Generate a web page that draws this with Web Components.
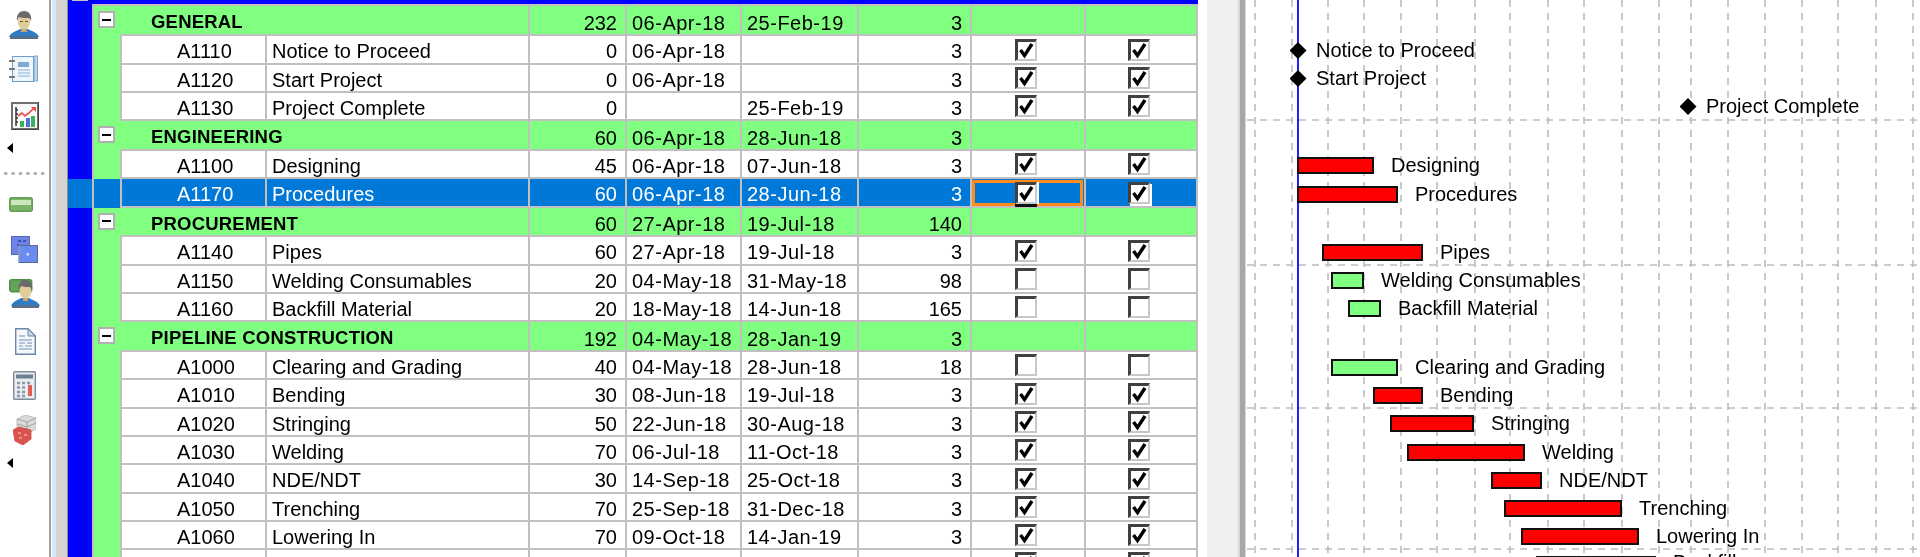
<!DOCTYPE html>
<html>
<head>
<meta charset="utf-8">
<title>Schedule</title>
<style>
    html, body { margin: 0; height: 557px; overflow: hidden; background: #fff; }
    body { font: 20px "Liberation Sans", Arial, sans-serif; color: #000; }
    pm-app { filter: blur(0.5px); }
</style>
</head>
<body>
<pm-app>
    <pm-toolbar slot="tools">
        <pm-tool icon="person" style="margin:10px 0 0 9px"></pm-tool>
        <pm-tool icon="notebook" style="margin:15px 0 0 9px"></pm-tool>
        <pm-tool icon="chart" style="margin:19px 0 0 11px"></pm-tool>
        <pm-tool icon="arrow" style="margin:13px 0 0 7px"></pm-tool>
        <pm-tool icon="sep" style="margin:19px 0 0 4px"></pm-tool>
        <pm-tool icon="bar" style="margin:22px 0 0 9px"></pm-tool>
        <pm-tool icon="squares" style="margin:24px 0 0 11px"></pm-tool>
        <pm-tool icon="assign" style="margin:16px 0 0 9px"></pm-tool>
        <pm-tool icon="doc" style="margin:19px 0 0 15px"></pm-tool>
        <pm-tool icon="calc" style="margin:16px 0 0 13px"></pm-tool>
        <pm-tool icon="cube" style="margin:15px 0 0 13px"></pm-tool>
        <pm-tool icon="arrow" style="margin:13px 0 0 7px"></pm-tool>
    </pm-toolbar>
    <pm-grid slot="grid">
        <pm-row group h="30" dur="232" start="06-Apr-18" finish="25-Feb-19" float="3">GENERAL</pm-row>
        <pm-row h="29" code="A1110" dur="0" start="06-Apr-18" float="3" checked>Notice to Proceed</pm-row>
        <pm-row h="28" code="A1120" dur="0" start="06-Apr-18" float="3" checked>Start Project</pm-row>
        <pm-row h="28" code="A1130" dur="0" finish="25-Feb-19" float="3" checked>Project Complete</pm-row>
        <pm-row group h="30" dur="60" start="06-Apr-18" finish="28-Jun-18" float="3">ENGINEERING</pm-row>
        <pm-row h="28" code="A1100" dur="45" start="06-Apr-18" finish="07-Jun-18" float="3" checked>Designing</pm-row>
        <pm-row selected h="29" code="A1170" dur="60" start="06-Apr-18" finish="28-Jun-18" float="3" checked>Procedures</pm-row>
        <pm-row group h="29" dur="60" start="27-Apr-18" finish="19-Jul-18" float="140">PROCUREMENT</pm-row>
        <pm-row h="29" code="A1140" dur="60" start="27-Apr-18" finish="19-Jul-18" float="3" checked>Pipes</pm-row>
        <pm-row h="28" code="A1150" dur="20" start="04-May-18" finish="31-May-18" float="98" unchecked>Welding Consumables</pm-row>
        <pm-row h="28" code="A1160" dur="20" start="18-May-18" finish="14-Jun-18" float="165" unchecked>Backfill Material</pm-row>
        <pm-row group h="30" dur="192" start="04-May-18" finish="28-Jan-19" float="3">PIPELINE CONSTRUCTION</pm-row>
        <pm-row h="28" code="A1000" dur="40" start="04-May-18" finish="28-Jun-18" float="18" unchecked>Clearing and Grading</pm-row>
        <pm-row h="29" code="A1010" dur="30" start="08-Jun-18" finish="19-Jul-18" float="3" checked>Bending</pm-row>
        <pm-row h="28" code="A1020" dur="50" start="22-Jun-18" finish="30-Aug-18" float="3" checked>Stringing</pm-row>
        <pm-row h="28" code="A1030" dur="70" start="06-Jul-18" finish="11-Oct-18" float="3" checked>Welding</pm-row>
        <pm-row h="29" code="A1040" dur="30" start="14-Sep-18" finish="25-Oct-18" float="3" checked>NDE/NDT</pm-row>
        <pm-row h="28" code="A1050" dur="70" start="25-Sep-18" finish="31-Dec-18" float="3" checked>Trenching</pm-row>
        <pm-row h="28" code="A1060" dur="70" start="09-Oct-18" finish="14-Jan-19" float="3" checked>Lowering In</pm-row>
        <pm-row h="28" checked></pm-row>
    </pm-grid>
    <pm-gantt slot="gantt">
        <pm-bar milestone x="43.5" y="42">Notice to Proceed</pm-bar>
        <pm-bar milestone x="43.5" y="70">Start Project</pm-bar>
        <pm-bar milestone x="433.5" y="98">Project Complete</pm-bar>
        <pm-bar x="51" w="77" y="157">Designing</pm-bar>
        <pm-bar x="51" w="101" y="186">Procedures</pm-bar>
        <pm-bar x="76" w="101" y="244">Pipes</pm-bar>
        <pm-bar green x="85" w="33" y="272">Welding Consumables</pm-bar>
        <pm-bar green x="102" w="33" y="300">Backfill Material</pm-bar>
        <pm-bar green x="85" w="67" y="359">Clearing and Grading</pm-bar>
        <pm-bar x="127" w="50" y="387">Bending</pm-bar>
        <pm-bar x="144" w="84" y="415">Stringing</pm-bar>
        <pm-bar x="161" w="118" y="444">Welding</pm-bar>
        <pm-bar x="245" w="51" y="472">NDE/NDT</pm-bar>
        <pm-bar x="258" w="118" y="500">Trenching</pm-bar>
        <pm-bar x="275" w="118" y="528">Lowering In</pm-bar>
        <pm-bar last x="290" w="120" y="556">Backfill</pm-bar>
    </pm-gantt>
</pm-app>

<script>
const ICONS = {
    person: `<svg width="30" height="30" viewBox="0 0 30 30">
        <path d="M0 27C2 22 8 21 11 19L19 19C22 21 28 22 30 27Z" fill="#2d7cc6"/>
        <rect x="1" y="26" width="28" height="3" fill="#56708c"/>
        <rect x="12" y="17" width="6" height="5" fill="#c9a36e"/>
        <ellipse cx="15" cy="12" rx="6" ry="7.5" fill="#e0cc96"/>
        <path d="M8 11C7 4 11 1 15 1C20 1 23 5 22 11L20 8C17 8 12 8 10 7Z" fill="#6b6b6b"/>
        <rect x="11" y="11" width="3" height="1" fill="#6a5a3c"/><rect x="16" y="11" width="3" height="1" fill="#6a5a3c"/>
    </svg>`,
    notebook: `<svg width="29" height="28" viewBox="0 0 29 28">
        <rect x="3.5" y="1.5" width="21" height="25" fill="#eef5fb" stroke="#6f9fcb"/>
        <rect x="25" y="1" width="3.5" height="25" fill="#bcd6ec" stroke="#6f9fcb" stroke-width=".8"/>
        <rect x="9" y="7" width="11" height="5" fill="#7fa9d2"/>
        <path d="M9 15H21M9 18H21M9 21H21" stroke="#a9c7e4" stroke-width="1.5"/>
        <path d="M0 6H6M0 14H6M0 22H6" stroke="#777" stroke-width="2"/>
    </svg>`,
    chart: `<svg width="28" height="28" viewBox="0 0 28 28">
        <rect x="1" y="1" width="26" height="26" fill="#fafafa" stroke="#707070" stroke-width="2"/>
        <path d="M28 0V28H0" fill="none" stroke="#444" stroke-width="2"/>
        <path d="M5 5V24M5 8H7M5 12H7M5 16H7M5 20H7" stroke="#333" stroke-width="1.5" fill="none"/>
        <rect x="9" y="19" width="4" height="6" fill="#35b558"/><rect x="15" y="16" width="4" height="9" fill="#4f74d8"/><rect x="20" y="14" width="4" height="11" fill="#35b558"/>
        <path d="M7 14L11 11L14 14L18 11L23 6" fill="none" stroke="#e84848" stroke-width="1.6"/>
        <path d="M20 5H25V10Z" fill="#e84848"/>
    </svg>`,
    arrow: `<svg width="6" height="10" viewBox="0 0 6 10" style="display:block"><path d="M6 0V10L0 5Z" fill="#000"/></svg>`,
    sep: `<svg width="42" height="3" viewBox="0 0 42 3" style="display:block"><path d="M0 1.5H42" stroke="#b4b4b4" stroke-width="3" stroke-dasharray="3.4 4"/></svg>`,
    bar: `<svg width="24" height="15" viewBox="0 0 24 15">
        <rect x=".7" y=".7" width="22.6" height="13.6" rx="2" fill="#7cb56a" stroke="#5f9e54" stroke-width="1.4"/>
        <rect x="2" y="3" width="20" height="5" fill="#cfe5bd"/>
    </svg>`,
    squares: `<svg width="27" height="27" viewBox="0 0 27 27">
        <rect x=".5" y=".5" width="18" height="18" fill="#6d83e6" stroke="#5468b8"/>
        <path d="M7 5h3M12 5h3M6 9h2" stroke="#2c3fb0" stroke-width="1.6"/>
        <rect x="8" y="9.5" width="18.5" height="17" fill="#6a8cf0" stroke="#fff" stroke-width="1"/>
        <rect x="8" y="9.5" width="18.5" height="17" fill="none" stroke="#57688f"/>
        <rect x="15.5" y="17" width="2.5" height="2.5" fill="#cfe0ff"/>
    </svg>`,
    assign: `<svg width="31" height="30" viewBox="0 0 31 30">
        <rect x=".7" y=".7" width="22" height="12" rx="2" fill="#62a558" stroke="#4f8e48" stroke-width="1.4"/>
        <path d="M2 27C4 22 9 21 12 19L20 19C23 21 29 22 31 27Z" fill="#2d7cc6"/>
        <rect x="3" y="26" width="27" height="3" fill="#56708c"/>
        <rect x="14" y="17" width="5" height="5" fill="#c9a36e"/>
        <ellipse cx="16.5" cy="12" rx="6" ry="7.5" fill="#e0cc96"/>
        <path d="M9.5 11C9 4 12 1 16.5 1C21 1 24 5 23 11L21 8C18 8 14 8 12 7Z" fill="#6b6b6b"/>
    </svg>`,
    doc: `<svg width="21" height="27" viewBox="0 0 21 27">
        <path d="M.7.7H13L20.3 8V26.3H.7Z" fill="#f4f7fb" stroke="#6c87a6" stroke-width="1.4"/>
        <path d="M13 .7V8H20.3Z" fill="#c7d6e6" stroke="#6c87a6"/>
        <path d="M4 8H10M4 12H17M4 15H10M12 15H17M4 18H8M10 18H17M4 21H17" stroke="#9ab3cc" stroke-width="1.4"/>
    </svg>`,
    calc: `<svg width="23" height="29" viewBox="0 0 23 29">
        <rect x=".7" y=".7" width="21.6" height="27.6" rx="1" fill="#e9edf1" stroke="#7e8c9a" stroke-width="1.4"/>
        <rect x="3" y="3.5" width="17" height="4" fill="#6d7f92"/>
        <path d="M4 12h3M9 12h3M14 12h3M4 16.500h3M9 16.500h3M4 21h3M9 21h3M4 25h3M9 25h3" stroke="#8b99a8" stroke-width="2.6"/>
        <rect x="15" y="14" width="4" height="11" fill="#e25a50"/>
    </svg>`,
    cube: `<svg width="23" height="30" viewBox="0 0 23 30">
        <path d="M4 4L12 0L23 3V14L14 19L4 15Z" fill="#dadada" stroke="#b4b4b4" stroke-width=".8"/>
        <path d="M4 4L14 7L23 3M14 7V19M4 9L14 12L23 8" fill="none" stroke="#9c9c9c" stroke-width=".9"/>
        <path d="M0 15L6 12L18 15L18 24L10 30L2 26Z" fill="#d9534f" stroke="#c44" stroke-width=".8"/>
        <path d="M5 18h3M11 20h3M6 23h3" stroke="#f0a8a4" stroke-width="1.5"/>
    </svg>`
};

const CHECK_MARK = `<svg width="17" height="17" viewBox="0 0 17 17" style="display:block"><path d="M2.500 8L6.500 13.500L14 2" fill="none" stroke="#000" stroke-width="3.400"/></svg>`;

const appTemplate = document.createElement("template");
appTemplate.innerHTML = `
    <style>
        :host { display: flex; height: 557px; width: 1920px; overflow: hidden; }
        .rail { display: flex; flex: none; }
        .rail i { display: block; }
        .gap { flex: none; width: 40px; display: flex; }
    </style>
    <slot name="tools"></slot>
    <div class="rail" style="width:17px">
        <i style="width:1px;background:#fff"></i>
        <i style="width:4px;background:#d3e8f8"></i>
        <i style="width:11px;background:#d4d4d4"></i>
        <i style="width:1px;background:#8c8c8c"></i>
    </div>
    <slot name="grid"></slot>
    <div class="gap">
        <i style="width:9px;background:#fff"></i>
        <i style="width:31px;background:#f0f0f0"></i>
    </div>
    <div class="rail" style="width:8px">
        <i style="width:2px;background:#d8d8d8"></i>
        <i style="width:5px;background:#a8a8a8"></i>
        <i style="width:1px;background:#d8d8d8"></i>
    </div>
    <slot name="gantt"></slot>
`;

class PmApp extends HTMLElement {
    constructor() {
        super();
        this.attachShadow({ mode: "open" }).append(appTemplate.content.cloneNode(true));
    }
}

const toolbarTemplate = document.createElement("template");
toolbarTemplate.innerHTML = `
    <style>
        :host { display: flex; flex-direction: column; flex: none; width: 49px; height: 557px; box-sizing: content-box; border-right: 2px solid #a0a0a0; background: #fff; }
    </style>
    <slot></slot>
`;

class PmToolbar extends HTMLElement {
    constructor() {
        super();
        this.attachShadow({ mode: "open" }).append(toolbarTemplate.content.cloneNode(true));
    }
}

class PmTool extends HTMLElement {
    constructor() {
        super();
        this.attachShadow({ mode: "open" });
    }

    connectedCallback() {
        this.shadowRoot.innerHTML = `<style>:host { display: block; line-height: 0; }</style>${ICONS[this.getAttribute("icon")]}`;
    }
}

const gridTemplate = document.createElement("template");
gridTemplate.innerHTML = `
    <style>
        :host { display: flex; flex-direction: column; flex: none; width: 1130px; height: 557px; overflow: hidden; background: #00f; box-sizing: border-box; }
        .head { flex: none; height: 6px; position: relative; }
        .head::after { content: ""; position: absolute; left: 24px; right: 0; top: 4px; height: 2px; background: #c0c0c0; }
        .stub { position: absolute; left: 4px; top: 0; width: 16px; height: 1px; background: #c0c0c0; }
    </style>
    <div class="head"><span class="stub"></span></div>
    <slot></slot>
`;

class PmGrid extends HTMLElement {
    constructor() {
        super();
        this.attachShadow({ mode: "open" }).append(gridTemplate.content.cloneNode(true));
    }
}

const rowTemplate = document.createElement("template");
rowTemplate.innerHTML = `
    <style>
        :host {
            display: grid;
            flex: none;
            grid-template-columns: 24px 28px 145px 263px 97px 115px 117px 113px 114px 114px;
            width: 1130px;
            background: #00f;
            line-height: 1;
        }
        .c {
            display: flex;
            align-items: center;
            box-sizing: border-box;
            border-left: 2px solid #c0c0c0;
            border-bottom: 2px solid #c0c0c0;
            background: #fff;
            padding-top: 3px;
            white-space: nowrap;
            min-width: 0;
            position: relative;
        }
        .head { background: #00f; border: 0; }
        .indent { background: #80ff80; border-bottom: 0; padding-top: 0; }
        .code { padding-left: 55px; }
        .name { padding-left: 5px; }
        .dur, .float { justify-content: flex-end; padding-right: 8px; }
        .date { padding-left: 5px; letter-spacing: 0.5px; }
        .box { padding-top: 0; justify-content: center; }
        .last { border-right: 2px solid #c0c0c0; }

        :host([group]) .c { background: #80ff80; padding-top: 5px; }
        :host([group]) .head { background: #00f; }
        :host([group]) .indent { padding-top: 0; }
        :host([group]) .name { grid-column: 3 / 5; padding-left: 31px; font-weight: bold; font-size: 18.5px; letter-spacing: 0.2px; border-left: 0; }
        :host([group]) .code { display: none; }

        :host([selected]) .c, :host([selected]) .head { background: #0078d7; color: #fff; }
        :host([selected]) .focus::after {
            content: "";
            position: absolute;
            inset: 1px 1px 0 0;
            border: 3px solid #ff8c1a;
        }

        .expander {
            box-sizing: border-box;
            width: 17px;
            height: 17px;
            margin: 0 0 3px 4px;
            border: 2px solid #b0b0b0;
            background: #fff;
            display: flex;
            align-items: center;
            justify-content: center;
        }
        .expander::before { content: ""; width: 9px; height: 2px; background: #000; }
    </style>
    <div class="c head"></div>
    <div class="c indent"></div>
    <div class="c code"></div>
    <div class="c name"><slot></slot></div>
    <div class="c dur"></div>
    <div class="c date start"></div>
    <div class="c date finish"></div>
    <div class="c float"></div>
    <div class="c box focus"></div>
    <div class="c box last"></div>
`;

class PmRow extends HTMLElement {
    constructor() {
        super();
        this.attachShadow({ mode: "open" }).append(rowTemplate.content.cloneNode(true));
    }

    connectedCallback() {
        const root = this.shadowRoot;
        this.style.height = `${this.getAttribute("h")}px`;
        root.querySelector(".code").textContent = this.getAttribute("code") || "";
        root.querySelector(".dur").textContent = this.getAttribute("dur") || "";
        root.querySelector(".start").textContent = this.getAttribute("start") || "";
        root.querySelector(".finish").textContent = this.getAttribute("finish") || "";
        root.querySelector(".float").textContent = this.getAttribute("float") || "";
        if (this.hasAttribute("group")) {
            root.querySelector(".indent").innerHTML = `<span class="expander"></span>`;
        } else if (this.hasAttribute("checked") || this.hasAttribute("unchecked")) {
            const checked = this.hasAttribute("checked");
            const focus = this.hasAttribute("selected");
            root.querySelector(".focus").innerHTML = `<pm-check ${checked ? "checked" : ""} ${focus ? "focused" : ""} style="margin-right:4px"></pm-check>`;
            root.querySelector(".last").innerHTML = `<pm-check ${checked ? "checked" : ""} ${focus ? "selected" : ""} style="margin-right:5px"></pm-check>`;
        }
    }
}

const checkTemplate = document.createElement("template");
checkTemplate.innerHTML = `
    <style>
        :host {
            display: block;
            box-sizing: border-box;
            position: relative;
            z-index: 1;
            flex: none;
            width: 22px;
            height: 22px;
            background: #fff;
            border-style: solid;
            border-width: 3px 2px 2px 3px;
            border-color: #404040 #c8c8c8 #c8c8c8 #404040;
        }
        :host([selected]) { box-shadow: 2px 2px 0 #fff; }
        :host([focused]) { box-shadow: 2px 0 0 #fff, 0 3px 0 #111; }
    </style>
`;

class PmCheck extends HTMLElement {
    constructor() {
        super();
        this.attachShadow({ mode: "open" }).append(checkTemplate.content.cloneNode(true));
    }

    connectedCallback() {
        if (this.hasAttribute("checked")) {
            this.shadowRoot.append(document.createRange().createContextualFragment(CHECK_MARK));
        }
    }
}

const ganttTemplate = document.createElement("template");
ganttTemplate.innerHTML = `
    <style>
        :host { display: block; flex: none; position: relative; width: 674px; height: 557px; overflow: hidden; background: #fff; }
        svg { position: absolute; left: 0; top: 0; }
    </style>
    <svg width="674" height="557" viewBox="0 0 674 557"></svg>
    <slot></slot>
`;

const GANTT_COLUMNS = [9, 46, 82, 118, 155, 191, 229, 264, 302, 338, 376, 413, 445, 482, 519, 556, 592, 630, 667];
const GANTT_ROWS = [120, 265, 408, 549];

class PmGantt extends HTMLElement {
    constructor() {
        super();
        this.attachShadow({ mode: "open" }).append(ganttTemplate.content.cloneNode(true));
        const dash = `stroke="#bcbcbc" stroke-width="1.600" stroke-dasharray="7 6"`;
        const columns = GANTT_COLUMNS.map(x => `<path d="M${x} 0V557" ${dash}/>`).join("");
        const rows = GANTT_ROWS.map(y => `<path d="M1 ${y}H674" ${dash}/>`).join("");
        this.shadowRoot.querySelector("svg").innerHTML = `${columns}${rows}<path d="M52 0V557" stroke="#2020ff" stroke-width="2"/>`;
    }
}

const barTemplate = document.createElement("template");
barTemplate.innerHTML = `
    <style>
        :host { position: absolute; display: flex; align-items: center; gap: 17px; height: 17px; white-space: nowrap; line-height: 1; }
        :host([milestone]) { gap: 9.500px; }
        .bar { box-sizing: border-box; flex: none; height: 17px; background: #f00; border: 2px solid #111; }
        :host([green]) .bar { background: #80ff80; }
        :host([milestone]) .bar { width: 17px; border: 0; background: #000; clip-path: polygon(50% 0, 100% 50%, 50% 100%, 0 50%); }
        .label { margin-bottom: 2px; }
        :host([last]) .label { margin-bottom: 6px; }
    </style>
    <div class="bar"></div>
    <span class="label"><slot></slot></span>
`;

class PmBar extends HTMLElement {
    constructor() {
        super();
        this.attachShadow({ mode: "open" }).append(barTemplate.content.cloneNode(true));
    }

    connectedCallback() {
        this.style.left = `${this.getAttribute("x")}px`;
        this.style.top = `${this.getAttribute("y")}px`;
        if (this.hasAttribute("w")) {
            this.shadowRoot.querySelector(".bar").style.width = `${this.getAttribute("w")}px`;
        }
    }
}

customElements.define("pm-check", PmCheck);
customElements.define("pm-tool", PmTool);
customElements.define("pm-toolbar", PmToolbar);
customElements.define("pm-row", PmRow);
customElements.define("pm-grid", PmGrid);
customElements.define("pm-bar", PmBar);
customElements.define("pm-gantt", PmGantt);
customElements.define("pm-app", PmApp);
</script>
</body>
</html>
